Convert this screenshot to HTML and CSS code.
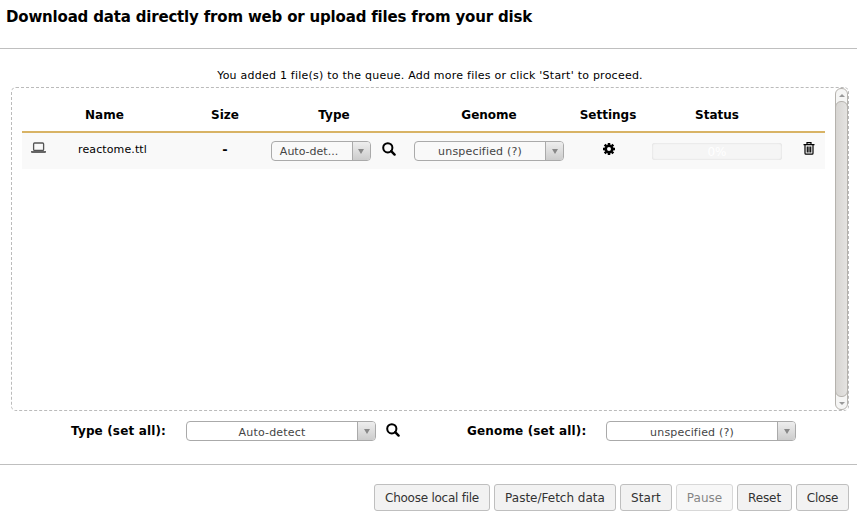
FILE: index.html
```html
<!DOCTYPE html>
<html lang="en">
<head>
<meta charset="utf-8">
<title>Upload</title>
<link rel="stylesheet" href="styles.css">
</head>
<body>
<svg class="defs" width="0" height="0">
  <symbol id="search" viewBox="0 0 14 14"><circle cx="5.8" cy="5.8" r="4.6" fill="none" stroke="#000" stroke-width="2"/><path d="M9.2 9.2l3.4 3.4" stroke="#000" stroke-width="2.4" stroke-linecap="round"/></symbol>
</svg>
<header class="modal-header"><h1>Download data directly from web or upload files from your disk</h1></header>
<main class="modal-body">
  <p class="info">You added 1 file(s) to the queue. Add more files or click 'Start' to proceed.</p>
  <section class="box">
    <div class="table">
      <div class="row head">
        <span></span><span class="name-head">Name</span><span>Size</span><span>Type</span><span>Genome</span><span>Settings</span><span>Status</span><span></span>
      </div>
      <div class="row item">
        <span><svg class="laptop" width="16" height="12" viewBox="0 0 16 12"><rect x="2.6" y="1" width="10" height="7.5" rx="1" fill="none" stroke="#555" stroke-width="1.3"/><path d="M0 8.9h15v1q0 1.1-1 1.1H1q-1 0-1-1.1z" fill="#666"/></svg></span>
        <span class="file">reactome.ttl</span>
        <span class="dash">-</span>
        <span class="type"><span class="select small"><span class="value">Auto-det...</span><i></i></span><svg width="14" height="14"><use href="#search"/></svg></span>
        <span><span class="select medium"><span class="value">unspecified (?)</span><i></i></span></span>
        <span><svg class="gear" width="12" height="12" viewBox="-6 -6 12 12"><circle r="3.3" fill="none" stroke="#000" stroke-width="2.6"/><g stroke="#000" stroke-width="2.5"><path d="M0-6v2M0 4v2M-6 0h2M4 0h2M-4.3-4.3l1.5 1.5M2.8 2.8l1.5 1.5M-4.3 4.3l1.5-1.5M2.8-2.8l1.5-1.5"/></g></svg></span>
        <span><span class="progress">0%</span></span>
        <span><svg class="trash" width="12" height="13" viewBox="0 0 12 13"><path d="M.5 2.6h11M4 2.3V.7h4v1.6M2 3v8.3q0 .9.9.9h6.2q.9 0 .9-.9V3M4.3 4.5v6M6 4.5v6M7.7 4.5v6" fill="none" stroke="#000" stroke-width="1.2"/></svg></span>
      </div>
    </div>
    <div class="scrollbar"><div class="step up"></div><div class="thumb"></div><div class="step down"></div></div>
  </section>
  <div class="setall">
    <label class="l-type">Type (set all):</label>
    <span class="select large"><span class="value">Auto-detect</span><i></i></span>
    <svg class="find" width="14" height="14"><use href="#search"/></svg>
    <label class="l-genome">Genome (set all):</label>
    <span class="select large"><span class="value">unspecified (?)</span><i></i></span>
  </div>
</main>
<footer>
  <button class="b1">Choose local file</button><button class="b2">Paste/Fetch data</button><button class="b3">Start</button><button class="b4" disabled>Pause</button><button class="b5">Reset</button><button class="b6">Close</button>
</footer>
</body>
</html>
```
FILE: styles.css
```css
* { box-sizing: border-box; }
body { margin: 0; width: 857px; height: 522px; overflow: hidden; background: #fff; color: #000; font: 11px "DejaVu Sans", sans-serif; }
.defs { position: absolute; }
svg { display: block; flex: none; }
.modal-header { height: 49px; border-bottom: 1px solid #bfbfbf; padding: 7px 6px 0; }
h1 { margin: 0; font: bold 15px/20px "DejaVu Sans", sans-serif; letter-spacing: -0.18px; white-space: nowrap; }
.modal-body { height: 416px; border-bottom: 1px solid #bfbfbf; padding: 18px 8px 0 11px; }
.info { margin: 0; height: 20px; line-height: 18px; letter-spacing: .235px; text-align: center; white-space: nowrap; }
.box { display: flex; justify-content: space-between; height: 324px; border: 1px dashed #bbb; border-radius: 5px; padding-left: 10px; }
.table { width: 803px; padding-top: 9px; }
.row { display: grid; grid-template-columns: 34px 133px 72px 146px 164px 74px 144px 36px; align-items: center; justify-items: center; white-space: nowrap; }
.head { height: 36px; border-bottom: 2px solid #d8b365; padding-top: 2px; font-weight: bold; font-size: 12px; }
.name-head { justify-self: start; padding-left: 29px; }
.item { height: 36px; background: #f9f9f9; }
.laptop { margin-top: -6px; }
.file { justify-self: start; padding-left: 22px; margin-top: -4px; letter-spacing: .12px; }
.dash { font-weight: bold; font-size: 13px; margin-top: -4px; }
.type { display: flex; gap: 11px; margin-left: -2px; }
.select { display: flex; height: 20px; border: 1px solid #aaa; border-radius: 4px; overflow: hidden; color: #444; }
.small { width: 100px; }
.medium { width: 150px; }
.large { width: 190px; }
.value { flex: 1; text-align: center; line-height: 20px; letter-spacing: .18px; white-space: nowrap; }
.small .value { padding-right: 5px; letter-spacing: 0; }
.large .value { line-height: 21px; }
.select i { width: 18px; border-left: 1px solid #aaa; background: linear-gradient(#eee, #ccc); display: flex; align-items: center; justify-content: center; }
.select i::after { content: ""; border: 3px solid transparent; border-top: 5px solid #888; border-bottom: 0; }
.type svg { margin-top: 1px; }
.gear { margin: -4px 0 0 2px; }
.trash { margin: -5px 0 0 3px; }
.progress { display: block; width: 130px; height: 17px; background: #f5f5f5; border-radius: 3px; box-shadow: inset 0 0 2px rgba(0,0,0,.16); color: #fff; font-size: 12px; text-align: center; line-height: 18px; }
.scrollbar { display: flex; flex-direction: column; width: 13px; border: 1px solid #b5b2ad; border-radius: 6px; background: #f5f5f4; }
.step { height: 12px; display: flex; justify-content: center; align-items: center; }
.step::after { content: ""; border: 3px solid transparent; }
.up::after { border-bottom-color: #999; border-top: 0; }
.down::after { border-top-color: #999; border-bottom: 0; }
.thumb { flex: 1; border: 1px solid #b5b2ad; margin: 0 -1px; border-radius: 6px; background: linear-gradient(90deg, #d7d5d2, #e4e3e1); }
.setall { display: flex; padding: 10px 0 0 60px; }
.setall label { font: bold 12px/20px "DejaVu Sans", sans-serif; letter-spacing: .15px; white-space: nowrap; }
.l-type { width: 115px; }
.find { margin: 2px 67px 0 10px; }
.l-genome { width: 139px; }
footer { display: flex; justify-content: flex-end; gap: 4px; padding: 19px 8px 0 0; }
button { height: 27px; border: 1px solid #bfbfbf; border-radius: 3px; background: #f2f2f2; color: #333; font: 12px "DejaVu Sans", sans-serif; letter-spacing: -.25px; padding: 0; white-space: nowrap; }
button:disabled { opacity: .6; }
.b1 { width: 116px; }
.b2 { width: 122px; letter-spacing: 0; }
.b3 { width: 52px; letter-spacing: .1px; }
.b4 { width: 57px; letter-spacing: 0; }
.b5 { width: 55px; letter-spacing: -.1px; }
.b6 { width: 53px; }
```
